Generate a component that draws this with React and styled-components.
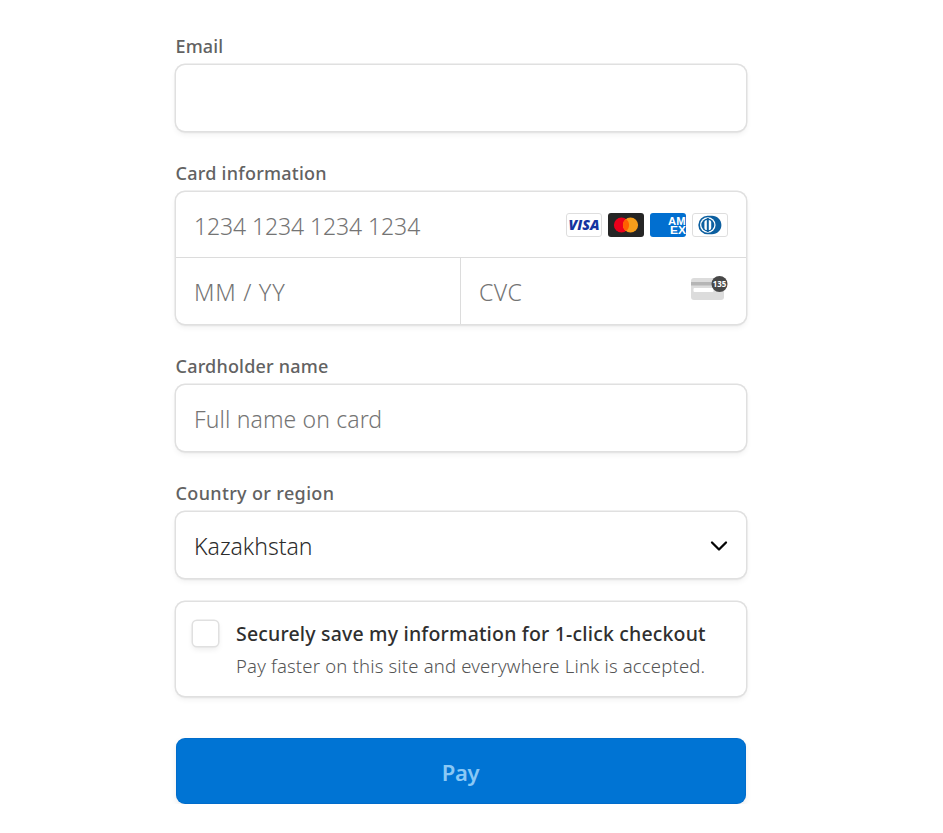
import React from "react";
import styled, { createGlobalStyle } from "styled-components";

const GlobalStyle = createGlobalStyle`
  * { box-sizing: border-box; }
  body { margin: 0; background: #fff; font-family: "Noto Sans", "Open Sans", sans-serif; }
`;

const Form = styled.form`
  width: 570px;
  margin-left: 176px;
  padding-top: 33px;
  display: flex;
  flex-direction: column;
`;

const Field = styled.div`
  display: flex;
  flex-direction: column;
  margin-bottom: ${(p) => p.$gap || 29}px;
`;

const Label = styled.label`
  height: 26px;
  line-height: 26px;
  margin: 0 0 6px -0.5px;
  font-size: 18px;
  font-weight: 500;
  color: #626262;
  white-space: nowrap;
  letter-spacing: ${(p) => p.$track || 0}px;
`;

const Panel = styled.div`
  border-radius: 9px;
  background: #fff;
  box-shadow: 0 0 0 1.5px #e0e0e0, 0 3px 6px rgba(0, 0, 0, 0.07), 0 1.5px 2px rgba(0, 0, 0, 0.05);
`;

const Row = styled.div`
  display: flex;
  & + & { border-top: 1px solid #dcdcdc; }
`;

const Cell = styled.div`
  flex: ${(p) => (p.$width ? `0 0 ${p.$width}px` : 1)};
  height: ${(p) => p.$height || 66}px;
  padding: 2px 18px 0;
  display: flex;
  align-items: center;
  justify-content: space-between;
  & + & { border-left: 1px solid #dcdcdc; }
`;

const Value = styled.span`
  font-size: ${(p) => p.$size || 23}px;
  font-weight: ${(p) => (p.$filled ? 350 : 300)};
  line-height: 32px;
  white-space: nowrap;
  color: ${(p) => (p.$filled ? "#2c2c2c" : "#747474")};
  letter-spacing: ${(p) => p.$track || 0}px;
`;

const Brands = styled.div`
  display: flex;
  gap: 6px;
  margin-top: -1px;
  svg { display: block; }
`;

const CvcIcon = styled.svg`
  display: block;
  margin-top: -11px;
`;

const SavePanel = styled(Panel)`
  height: 94px;
  padding: 18px 17px;
  display: flex;
  gap: 17px;
`;

const Checkbox = styled.span`
  flex: none;
  width: 25px;
  height: 25px;
  margin: 1px 1px 0 0;
  border-radius: 4px;
  background: #fff;
  box-shadow: 0 0 0 1.5px #e0e0e0, 0 3px 6px rgba(0, 0, 0, 0.09);
`;

const SaveTitle = styled.div`
  font-size: 19.5px;
  font-weight: 500;
  line-height: 28px;
  color: #2f2f2f;
  white-space: nowrap;
  letter-spacing: 0.18px;
`;

const SaveText = styled.div`
  margin-top: 4px;
  font-size: 18.5px;
  font-weight: 300;
  line-height: 27px;
  color: #555;
  white-space: nowrap;
  letter-spacing: 0.18px;
`;

const PayButton = styled.button`
  height: 66px;
  margin-top: 42px;
  padding: 1px 1px 0 0;
  border: 0;
  border-radius: 9px;
  background: #0074d4;
  box-shadow: inset 0 0 0 1px rgba(0, 80, 170, 0.2), 0 3px 6px rgba(0, 0, 0, 0.08);
  color: #8ac8f5;
  font: 600 22px/30px "Noto Sans", sans-serif;
  letter-spacing: -0.3px;
`;

function Visa() {
  return (
    <svg width="36" height="24" viewBox="0 0 36 24">
      <rect x="0.5" y="0.5" width="35" height="23" rx="2.5" fill="#fff" stroke="#dedede" />
      <text x="2.5" y="16.8" textLength="31" lengthAdjust="spacingAndGlyphs" fontFamily="Open Sans, sans-serif" fontSize="13.5" fontWeight="800" fontStyle="italic" fill="#1434a0">VISA</text>
    </svg>
  );
}

function Mastercard() {
  return (
    <svg width="36" height="24" viewBox="0 0 36 24">
      <rect width="36" height="24" rx="3" fill="#252525" />
      <circle cx="13.5" cy="12" r="7.6" fill="#eb001b" />
      <circle cx="22.5" cy="12" r="7.6" fill="#f79e1b" />
      <path d="M18 5.9a7.6 7.6 0 0 1 0 12.2a7.6 7.6 0 0 1 0-12.2z" fill="#ff5f00" />
    </svg>
  );
}

function Amex() {
  return (
    <svg width="36" height="24" viewBox="0 0 36 24">
      <rect width="36" height="24" rx="3" fill="#016fd0" />
      <g fontFamily="Liberation Sans, sans-serif" fontWeight="700" fontSize="11" fill="#fff">
        <text x="18" y="12" textLength="17.5" lengthAdjust="spacingAndGlyphs">AM</text>
        <text x="20" y="20.6" textLength="16" lengthAdjust="spacingAndGlyphs">EX</text>
      </g>
    </svg>
  );
}

function Diners() {
  return (
    <svg width="36" height="24" viewBox="0 0 36 24">
      <rect x="0.5" y="0.5" width="35" height="23" rx="2.5" fill="#fff" stroke="#dedede" />
      <path d="M15.5 2.8h4.5c5.2 0 9.4 4 9.4 9.2s-4.2 9.2-9.4 9.2h-4.5a9.2 9.2 0 0 1 0-18.4z" fill="#0c5fa0" />
      <circle cx="15.8" cy="12" r="7.8" fill="#fff" />
      <circle cx="15.8" cy="12" r="6.5" fill="#0c5fa0" />
      <rect x="12.4" y="7" width="6.8" height="10" rx="2.6" fill="#fff" />
      <rect x="14.8" y="5" width="2" height="14" fill="#0c5fa0" />
    </svg>
  );
}

function Cvc() {
  return (
    <CvcIcon width="38" height="26" viewBox="0 0 38 26">
      <rect x="1" y="4" width="33" height="22" rx="3" fill="#dcdcdc" />
      <rect x="1" y="8" width="33" height="3.5" fill="#b5b5b5" />
      <rect x="3.5" y="14" width="20" height="4" rx="1" fill="#fff" />
      <circle cx="29.5" cy="10" r="8" fill="#484848" />
      <text x="29.5" y="13.2" textAnchor="middle" textLength="13.5" lengthAdjust="spacingAndGlyphs" fontFamily="Open Sans, sans-serif" fontSize="9" fontWeight="700" fill="#fff">135</text>
    </CvcIcon>
  );
}

function Chevron() {
  return (
    <svg width="18" height="12" viewBox="0 0 18 12" fill="none" stroke="#050505" strokeWidth="2.3" strokeLinecap="round" strokeLinejoin="round">
      <path d="M2 2.5L9 9.5L16 2.5" />
    </svg>
  );
}

export default function App() {
  return (
    <>
      <GlobalStyle />
      <Form>
        <Field>
          <Label $track={0.1}>Email</Label>
          <Panel><Cell /></Panel>
        </Field>
        <Field>
          <Label $track={0.25}>Card information</Label>
          <Panel>
            <Row>
              <Cell $height={65}>
                <Value $track={-0.1}>1234 1234 1234 1234</Value>
                <Brands><Visa /><Mastercard /><Amex /><Diners /></Brands>
              </Cell>
            </Row>
            <Row>
              <Cell $width={284}><Value $size={23.5} $track={0.7}>MM / YY</Value></Cell>
              <Cell><Value $track={0.5}>CVC</Value><Cvc /></Cell>
            </Row>
          </Panel>
        </Field>
        <Field>
          <Label $track={0.2}>Cardholder name</Label>
          <Panel><Cell><Value $track={0.12}>Full name on card</Value></Cell></Panel>
        </Field>
        <Field $gap={24}>
          <Label $track={0.35}>Country or region</Label>
          <Panel><Cell><Value $filled>Kazakhstan</Value><Chevron /></Cell></Panel>
        </Field>
        <SavePanel>
          <Checkbox />
          <div>
            <SaveTitle>Securely save my information for 1-click checkout</SaveTitle>
            <SaveText>Pay faster on this site and everywhere Link is accepted.</SaveText>
          </div>
        </SavePanel>
        <PayButton type="button">Pay</PayButton>
      </Form>
    </>
  );
}
